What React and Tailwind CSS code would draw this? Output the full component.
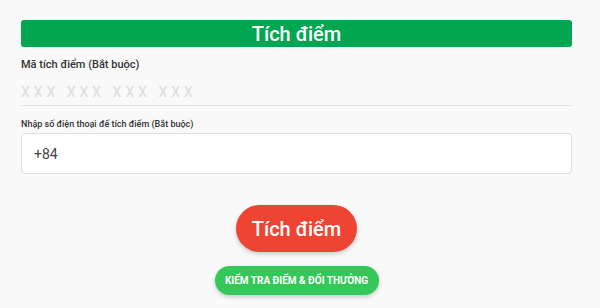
export default function App() {
  return (
    <div className="min-h-[308px] w-[600px] bg-[#f9f9f9] pt-[20px] font-['Roboto',sans-serif]">
      <div className="ml-[21px] w-[551px]">
        {/* tiêu đề */}
        <div className="flex h-[27px] items-center justify-center rounded-[3px] bg-[#00a650] text-[20px] font-medium leading-none text-white">
          Tích điểm
        </div>

        <label className="mt-[11px] block text-[11px] font-medium leading-[14px] text-[#333]">
          Mã tích điểm (Bắt buộc)
        </label>
        <input
          type="text"
          placeholder="XXX XXX XXX XXX"
          className="mt-[2px] block h-[32px] w-full border-b border-[#e3e3e3] bg-transparent pt-[4px] text-[14px] tracking-[4px] text-[#333] outline-none placeholder:text-[#dcdcdc]"
        />

        <label className="mt-[12px] block text-[9px] font-medium leading-[12px] text-[#333]">
          Nhập số điện thoại để tích điểm (Bắt buộc)
        </label>
        <input
          type="text"
          defaultValue="+84"
          className="mt-[3px] block h-[41px] w-full rounded-[4px] border border-[#dedede] bg-white px-[12px] text-[14px] text-[#444] outline-none"
        />

        <div className="mt-[31px] flex flex-col items-center">
          <button className="h-[47px] w-[121px] rounded-full bg-[#ee4434] text-[20px] font-medium text-white shadow-[0_2px_4px_rgba(0,0,0,0.2)]">
            Tích điểm
          </button>
          <button className="mt-[14px] h-[29px] w-[164px] rounded-full bg-[#34c759] text-[10px] font-bold text-white shadow-[0_2px_4px_rgba(0,0,0,0.2)]">
            KIỂM TRA ĐIỂM &amp; ĐỔI THƯỞNG
          </button>
        </div>
      </div>
    </div>
  );
}
